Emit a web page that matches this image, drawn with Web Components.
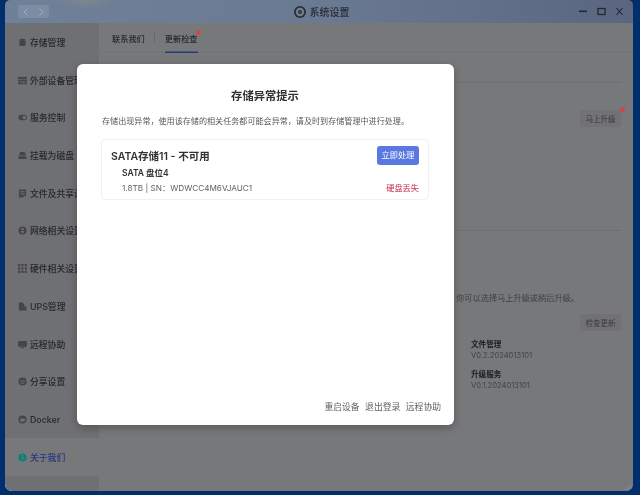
<!DOCTYPE html>
<html lang="zh">
<head>
<meta charset="utf-8">
<title>系统设置</title>
<style>
  html, body { margin: 0; height: 100%; overflow: hidden; }
  body {
    background: #012f6d;
    font-family: Inter, "Noto Sans CJK SC", "Noto Sans", sans-serif;
    font-size: 9px;
  }
</style>
</head>
<body>

<app-window>
  <title-bar slot="title">系统设置</title-bar>

  <side-item slot="side" icon="disk">存储管理</side-item>
  <side-item slot="side" icon="device">外部设备管理</side-item>
  <side-item slot="side" icon="toggle">服务控制</side-item>
  <side-item slot="side" icon="mount">挂载为磁盘</side-item>
  <side-item slot="side" icon="file">文件及共享设置</side-item>
  <side-item slot="side" icon="globe">网络相关设置</side-item>
  <side-item slot="side" icon="grid">硬件相关设置</side-item>
  <side-item slot="side" icon="ups">UPS管理</side-item>
  <side-item slot="side" icon="screen">远程协助</side-item>
  <side-item slot="side" icon="share">分享设置</side-item>
  <side-item slot="side" icon="docker">Docker</side-item>
  <side-item slot="side" icon="info" active>关于我们</side-item>

  <tab-bar slot="main"></tab-bar>
  <update-pane slot="main"></update-pane>

  <alert-dialog slot="dialog" heading="存储异常提示">
    <span slot="message">存储出现异常，使用该存储的相关任务都可能会异常，请及时到存储管理中进行处理。</span>
    <storage-card></storage-card>
  </alert-dialog>
</app-window>

<script>
class AppWindow extends HTMLElement {
  constructor() {
    super();
    this.shadowDOM = this.attachShadow({mode: "open"});
    this.shadowDOM.innerHTML = `
    <style>
      :host {
        display: flex;
        flex-direction: column;
        width: 628px;
        height: 491px;
        margin-left: 5px;
        border-radius: 5px 5px 7px 7px;
        overflow: hidden;
        filter: blur(.3px);
      }
      .body {
        flex: 1;
        display: flex;
        position: relative;
        background: #eff0f5;
        min-height: 0;
      }
      .side {
        width: 94px;
        flex: none;
        background: #dfe0e6;
        display: flex;
        flex-direction: column;
        padding-top: .7px;
      }
      .main {
        flex: 1;
        min-width: 0;
      }
      .overlay {
        position: absolute;
        inset: 0;
        background: rgba(0, 0, 0, .5);
        padding: 41px 0 0 72px;
      }
      .grip {
        position: absolute;
        right: 1px;
        bottom: 1px;
        width: 6px;
        height: 6px;
      }
    </style>
    <slot name="title"></slot>
    <div class="body">
      <div class="side"><slot name="side"></slot></div>
      <div class="main"><slot name="main"></slot></div>
      <div class="overlay"><slot name="dialog"></slot></div>
      <svg class="grip" viewBox="0 0 6 6" fill="none" stroke="#9a9ba0" stroke-width=".6"><path d="M5.500 .5 .5 5.500M5.500 3 3 5.500"/></svg>
    </div>`;
  }
}

class TitleBar extends HTMLElement {
  constructor() {
    super();
    this.shadowDOM = this.attachShadow({mode: "open"});
    this.shadowDOM.innerHTML = `
    <style>
      :host {
        display: grid;
        grid-template-columns: 1fr auto 1fr;
        align-items: center;
        height: 23px;
        flex: none;
        padding: 0 8px 0 13px;
        box-sizing: border-box;
        color: #2a2d35;
        font-size: 10px;
        font-weight: 500;
        background:
          radial-gradient(ellipse 32px 9px at 80px 0, rgba(165, 155, 115, .3), transparent),
          linear-gradient(90deg, #6f8099 0%, #6a7a92 50%, #5a6680 100%);
      }
      .nav {
        width: 31px;
        height: 13px;
        background: rgba(255, 255, 255, .1);
        border-radius: 2px;
        display: flex;
        justify-content: space-between;
        align-items: center;
        padding: 0 5px;
        box-sizing: border-box;
      }
      .name { display: flex; align-items: center; gap: 4px; }
      .ctrl { display: flex; justify-content: flex-end; align-items: center; gap: 7px; }
      svg { display: block; }
    </style>
    <div><div class="nav">
      <svg width="5" height="8" viewBox="0 0 5 8" fill="none" stroke="#a4b0c2" stroke-width=".9"><path d="M4.500 .5 1 4l3.500 3.500"/></svg>
      <svg width="5" height="8" viewBox="0 0 5 8" fill="none" stroke="#a4b0c2" stroke-width=".9"><path d="M.5 .5 4 4 .5 7.500"/></svg>
    </div></div>
    <div class="name">
      <svg width="12" height="12" viewBox="0 0 11 11"><circle cx="5.500" cy="5.500" r="5.500" fill="#2c2f36"/><circle cx="5.500" cy="5.500" r="3.800" fill="#76838f"/><circle cx="5.500" cy="5.500" r="2" fill="#39424f"/></svg>
      <span><slot></slot></span>
    </div>
    <div class="ctrl">
      <svg width="11" height="9" viewBox="0 0 11 9" fill="#24272d"><rect x="1" y="3.500" width="8" height="1.600"/></svg>
      <svg width="11" height="9" viewBox="0 0 11 9" fill="none" stroke="#24272d" stroke-width="1.300"><rect x="2" y="1.500" width="7" height="6"/></svg>
      <svg width="11" height="9" viewBox="0 0 11 9" fill="none" stroke="#24272d" stroke-width="1.100"><path d="M2.500 1 8.500 8M8.500 1 2.500 8"/></svg>
    </div>`;
  }
}

const SIDE_ICONS = {
  disk: '<ellipse cx="5" cy="2" rx="3.500" ry="1.300"/><path d="M1.500 2.500v5.500c0 1 7 1 7 0V2.500c-1 1.200-6 1.200-7 0z"/>',
  device: '<rect x="0" y="1" width="10" height="2.200"/><rect x="0" y="4" width="10" height="2.200"/><rect x="0" y="7" width="6" height="2.200"/><rect x="7" y="7" width="3" height="2.200"/>',
  toggle: '<path fill-rule="evenodd" d="M3.500 2h3.500a3 3 0 0 1 0 6H3.500a3 3 0 0 1 0-6zM7 3a2 2 0 0 0 0 4 2 2 0 0 0 0-4z"/>',
  mount: '<path d="M2.500 1h5l1.500 4H1z"/><rect x="0.500" y="5.800" width="9" height="3" rx=".6"/>',
  file: '<path fill-rule="evenodd" d="M1 .5h8v7.500H6.500L5.500 9.500H1zM2.500 2.500v1h5v-1zM2.500 5v1h5V5z"/>',
  globe: '<path fill-rule="evenodd" d="M5 .5a4.500 4.500 0 1 0 0 9 4.500 4.500 0 0 0 0-9zM3.500 2.500h3v2h-3zM3.500 5.500h3v2h-3z"/>',
  grid: '<rect x="0" y="0" width="2.500" height="2.500"/><rect x="3.700" y="0" width="2.500" height="2.500"/><rect x="7.400" y="0" width="2.500" height="2.500"/><rect x="0" y="3.700" width="2.500" height="2.500"/><rect x="3.700" y="3.700" width="2.500" height="2.500"/><rect x="7.400" y="3.700" width="2.500" height="2.500"/><rect x="0" y="7.400" width="2.500" height="2.500"/><rect x="3.700" y="7.400" width="2.500" height="2.500"/><rect x="7.400" y="7.400" width="2.500" height="2.500"/>',
  ups: '<path d="M1 .5h4l2 2v2.500H9.500V9.500H1z"/>',
  screen: '<rect x="0" y="1" width="10" height="6.500" rx=".8"/><rect x="3" y="8" width="4" height="1.200"/>',
  share: '<path fill-rule="evenodd" d="M5 .5a4.500 4.500 0 1 0 0 9 4.500 4.500 0 0 0 0-9zM3.500 3.500a1 1 0 1 1 0 2 1 1 0 0 1 0-2zM6.500 3.500a1 1 0 1 1 0 2 1 1 0 0 1 0-2zM2.800 6.300h4.400A2.500 2.500 0 0 1 2.800 6.300z"/>',
  docker: '<path fill-rule="evenodd" d="M5 .5a4.500 4.500 0 1 0 0 9 4.500 4.500 0 0 0 0-9zM2.500 4h4.500c.6 0 1 .4 1 1a2.500 2.500 0 0 1-2.500 2.500h-1.500A1.500 1.500 0 0 1 2.500 6z"/>',
  info: '<path fill-rule="evenodd" style="fill:#1cffe8" d="M5 .5a4.500 4.500 0 1 0 0 9 4.500 4.500 0 0 0 0-9zM4.400 2.300h1.200v1.200H4.400zM4.400 4.300h1.200v3.400H4.400z"/>'
};

class SideItem extends HTMLElement {
  constructor() {
    super();
    this.shadowDOM = this.attachShadow({mode: "open"});
  }

  connectedCallback() {
    const icon = SIDE_ICONS[this.getAttribute("icon")];
    this.shadowDOM.innerHTML = `
    <style>
      :host {
        display: flex;
        align-items: center;
        gap: 3px;
        height: 37.700px;
        padding-left: 13px;
        color: #4e4f55;
        font-size: 8.800px;
        font-weight: 500;
        white-space: nowrap;
      }
      :host([active]) {
        background: #eff0f5;
        color: #4c6cff;
      }
      svg { width: 9px; height: 9px; flex: none; fill: #8a8b92; }
    </style>
    <svg viewBox="0 0 10 10">${icon}</svg>
    <span><slot></slot></span>`;
  }
}

class TabBar extends HTMLElement {
  constructor() {
    super();
    this.shadowDOM = this.attachShadow({mode: "open"});
    this.shadowDOM.innerHTML = `
    <style>
      :host {
        display: flex;
        align-items: stretch;
        height: 29px;
        padding-left: 13px;
        border-bottom: 1px solid #e4e5ea;
        font-size: 8.200px;
        font-weight: 500;
        color: #4e4f55;
      }
      .tab { display: flex; align-items: center; position: relative; }
      .sep { width: 1px; height: 9px; background: #cfd0d6; margin: 10px 10px 0 9px; }
      .on { box-shadow: 0 1px 0 #5070ff, inset 0 -.5px 0 #5070ff; }
      .dot {
        position: absolute;
        z-index: 1;
        right: -3px;
        top: 7px;
        width: 5px;
        height: 5px;
        border-radius: 50%;
        background: #c94a48;
      }
    </style>
    <div class="tab">联系我们</div>
    <div class="sep"></div>
    <div class="tab on">更新检查<i class="dot"></i></div>`;
  }
}

class VersionItem extends HTMLElement {
  constructor() {
    super();
    this.shadowDOM = this.attachShadow({mode: "open"});
    this.shadowDOM.innerHTML = `
    <style>
      :host {
        display: block;
        font-size: 7.600px;
        line-height: 11px;
        color: #88898e;
        margin-bottom: 8px;
      }
      b { display: block; color: #38393e; font-weight: 700; }
    </style>
    <b><slot name="name"></slot></b>
    <slot></slot>`;
  }
}

class UpdatePane extends HTMLElement {
  constructor() {
    super();
    this.shadowDOM = this.attachShadow({mode: "open"});
    this.shadowDOM.innerHTML = `
    <style>
      :host {
        display: block;
        padding: 29px 12px 0 13px;
        font-size: 8.200px;
        color: #808186;
      }
      .rule { border-top: 1px dotted #cfd0d6; }
      .row { display: flex; justify-content: flex-end; }
      .btn {
        position: relative;
        width: 41px;
        height: 17px;
        font-size: 7.500px;
        border-radius: 2px;
        background: #e4e5ea;
        color: #77787d;
        display: flex;
        align-items: center;
        justify-content: center;
      }
      .first { margin-top: 27px; }
      .dot {
        position: absolute;
        z-index: 1;
        right: -4px;
        top: -3px;
        width: 5px;
        height: 5px;
        border-radius: 50%;
        background: #c94a48;
      }
      .second-rule { margin-top: 103px; }
      .hint { margin-top: 61.500px; text-align: right; padding-right: 42px; line-height: 11px; }
      .second { margin-top: 10.500px; }
      .versions { margin: 7.500px 0 0 359px; }
    </style>
    <div class="rule"></div>
    <div class="row first"><div class="btn">马上升级<i class="dot"></i></div></div>
    <div class="rule second-rule"></div>
    <div class="hint">，你可以选择马上升级或稍后升级。</div>
    <div class="row second"><div class="btn">检查更新</div></div>
    <div class="versions">
      <version-item><span slot="name">文件管理</span>V0.2.2024013101</version-item>
      <version-item><span slot="name">升级服务</span>V0.1.2024013101</version-item>
    </div>`;
  }
}

class StorageCard extends HTMLElement {
  constructor() {
    super();
    this.shadowDOM = this.attachShadow({mode: "open"});
    this.shadowDOM.innerHTML = `
    <style>
      :host {
        display: block;
        height: 61px;
        box-sizing: border-box;
        border: 1px solid #f1f1f3;
        border-radius: 4px;
        padding: 5.500px 9px 0 9px;
      }
      .top { display: flex; justify-content: space-between; align-items: center; height: 20px; }
      .name { font-size: 10.500px; font-weight: 600; color: #303133; margin-top: -1px; }
      button {
        all: unset;
        width: 42px;
        height: 19px;
        text-align: center;
        line-height: 19px;
        font-size: 8.200px;
        color: #fff;
        background: #5b78e2;
        border-radius: 3px;
      }
      .slot { font-size: 8.500px; font-weight: 600; color: #303133; margin: 0 0 0 11px; line-height: 11px; padding-top: 2px; }
      .row {
        display: flex;
        justify-content: space-between;
        margin: 4px 0 0 11px;
        font-size: 8.200px;
        line-height: 11px;
        color: #606266;
      }
      .lost { color: #c8324f; }
    </style>
    <div class="top">
      <span class="name">SATA存储11 - 不可用</span>
      <button>立即处理</button>
    </div>
    <div class="slot">SATA 盘位4</div>
    <div class="row"><span>1.8TB | SN：WDWCC4M6VJAUC1</span><span class="lost">硬盘丢失</span></div>`;
  }
}

class AlertDialog extends HTMLElement {
  constructor() {
    super();
    this.shadowDOM = this.attachShadow({mode: "open"});
  }

  connectedCallback() {
    this.shadowDOM.innerHTML = `
    <style>
      :host {
        display: flex;
        flex-direction: column;
        width: 377px;
        height: 361px;
        box-sizing: border-box;
        padding: 24px 25px 12px 24px;
        background: #fff;
        border-radius: 6px;
        box-shadow: 0 3px 10px rgba(0, 0, 0, .25);
      }
      h2 {
        margin: 0;
        text-align: center;
        font-size: 11.300px;
        line-height: 16px;
        font-weight: 600;
        color: #303133;
      }
      .msg {
        margin: 10.500px 0 12.500px 1px;
        font-size: 8.080px;
        line-height: 12px;
        color: #55575c;
        white-space: nowrap;
      }
      .body { flex: 1; }
      .foot {
        display: flex;
        justify-content: flex-end;
        gap: 5.500px;
        margin-right: -12px;
        font-size: 8.800px;
        line-height: 12px;
        color: #606266;
      }
    </style>
    <h2>${this.getAttribute("heading")}</h2>
    <div class="msg"><slot name="message"></slot></div>
    <div class="body"><slot></slot></div>
    <div class="foot"><span>重启设备</span><span>退出登录</span><span>远程协助</span></div>`;
  }
}

customElements.define("title-bar", TitleBar);
customElements.define("side-item", SideItem);
customElements.define("tab-bar", TabBar);
customElements.define("version-item", VersionItem);
customElements.define("update-pane", UpdatePane);
customElements.define("storage-card", StorageCard);
customElements.define("alert-dialog", AlertDialog);
customElements.define("app-window", AppWindow);
</script>
</body>
</html>
